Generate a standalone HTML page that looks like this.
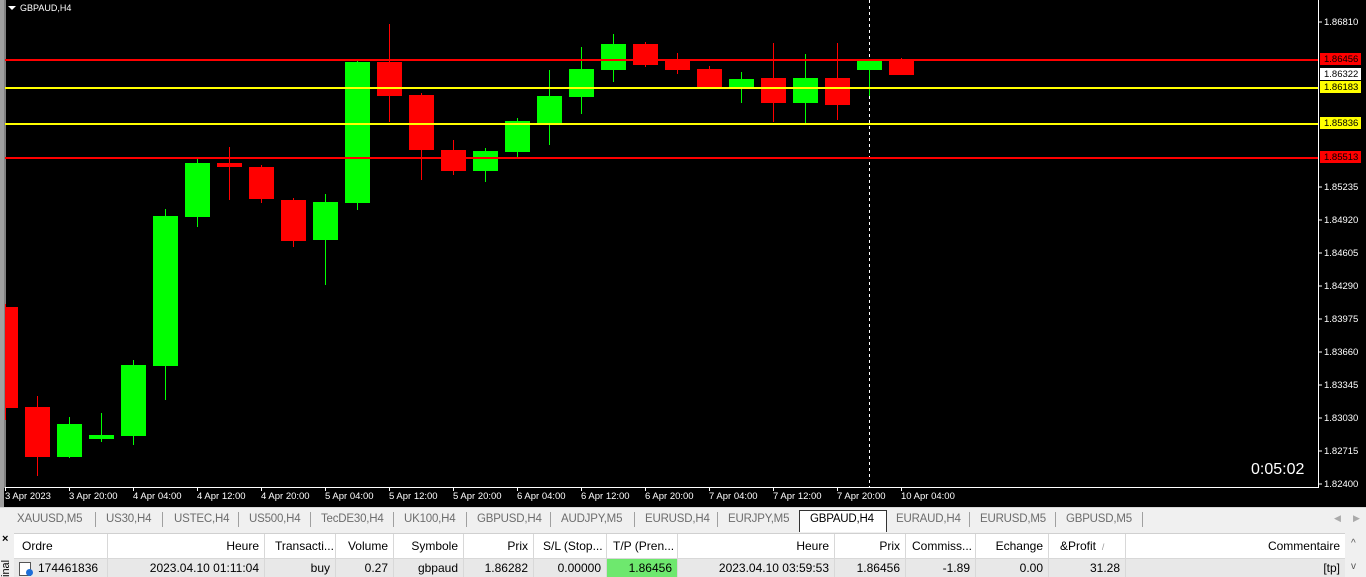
<!DOCTYPE html>
<html><head><meta charset="utf-8"><style>
*{margin:0;padding:0;box-sizing:border-box}
body{width:1366px;height:577px;overflow:hidden;background:#f0f0f0;font-family:"Liberation Sans",Tahoma,sans-serif;position:relative}
.abs{position:absolute}
.tabs{left:0;top:507px;width:1366px;height:24px;background:#f0f0f0;border-top:1px solid #d8d8d8}
.tab{position:absolute;top:5px;font-size:11.5px;color:#6d6d6d;letter-spacing:-0.2px}
.sep{position:absolute;top:4px;width:1px;height:15px;background:#a0a0a0}
.hdr{top:533px;height:26px;background:#fff;border-top:1px solid #d0d0d0}
.c{position:absolute;font-size:12px;color:#000;white-space:nowrap;overflow:hidden;padding:0 5px}
.h{top:539px}
.r{top:561px}
.vl{position:absolute;top:534px;width:1px;height:43px;background:#d8d8d8}
</style></head><body>
<div class="abs" style="left:0;top:0;width:4px;height:507px;background:#a0a0a0"></div>
<svg class="abs" style="left:4px;top:0" width="1362" height="507" viewBox="4 0 1362 507" font-family="Liberation Sans, sans-serif">
<rect x="4" y="0" width="1362" height="507" fill="#000"/>
<line x1="5" y1="0" x2="5" y2="488" stroke="#fff" stroke-width="1"/>
<line x1="1318.5" y1="0" x2="1318.5" y2="488" stroke="#fff"/>
<line x1="5" y1="487.5" x2="1319" y2="487.5" stroke="#fff"/>
<polygon points="8,6 16,6 12,10" fill="#fff"/>
<text x="20" y="11" font-size="9" fill="#fff">GBPAUD,H4</text>
<line x1="869.5" y1="0" x2="869.5" y2="487" stroke="#fff" stroke-dasharray="3,3"/>
<g id="cs"></g>
<rect x="5" y="59" width="1313" height="2" fill="#f00"/>
<rect x="5" y="87" width="1313" height="2" fill="#ff0"/>
<rect x="5" y="123" width="1313" height="2" fill="#ff0"/>
<rect x="5" y="157" width="1313" height="2" fill="#f00"/>
<g font-size="9.5" fill="#fff">
<g stroke="#fff"><line x1="1318" y1="22" x2="1322" y2="22"/><line x1="1318" y1="187" x2="1322" y2="187"/><line x1="1318" y1="220" x2="1322" y2="220"/><line x1="1318" y1="253" x2="1322" y2="253"/><line x1="1318" y1="286" x2="1322" y2="286"/><line x1="1318" y1="319" x2="1322" y2="319"/><line x1="1318" y1="352" x2="1322" y2="352"/><line x1="1318" y1="385" x2="1322" y2="385"/><line x1="1318" y1="418" x2="1322" y2="418"/><line x1="1318" y1="451" x2="1322" y2="451"/><line x1="1318" y1="484" x2="1322" y2="484"/></g>
<text x="1324" y="25">1.86810</text><text x="1324" y="190">1.85235</text><text x="1324" y="223">1.84920</text><text x="1324" y="256">1.84605</text><text x="1324" y="289">1.84290</text><text x="1324" y="322">1.83975</text><text x="1324" y="355">1.83660</text><text x="1324" y="388">1.83345</text><text x="1324" y="421">1.83030</text><text x="1324" y="454">1.82715</text><text x="1324" y="487">1.82400</text>
</g>
<rect x="1320" y="53" width="41" height="12" fill="#f00"/><text x="1324" y="62" font-size="9.5" fill="#000">1.86456</text>
<rect x="1320" y="68" width="41" height="12" fill="#fff"/><text x="1324" y="77" font-size="9.5" fill="#000">1.86322</text>
<rect x="1320" y="81" width="41" height="12" fill="#ff0"/><text x="1324" y="90" font-size="9.5" fill="#000">1.86183</text>
<rect x="1320" y="117" width="41" height="12" fill="#ff0"/><text x="1324" y="126" font-size="9.5" fill="#000">1.85836</text>
<rect x="1320" y="151" width="41" height="12" fill="#f00"/><text x="1324" y="160" font-size="9.5" fill="#000">1.85513</text>
<text x="1251" y="474" font-size="16" fill="#fff">0:05:02</text>
<g font-size="9.5" fill="#fff" id="tl"></g>
</svg>
<script>
var d=[[0,'r',307,408,304,420],[1,'r',407,457,396,476],[2,'g',424,457,417,458],[3,'g',435,439,413,442],[4,'g',365,436,360,445],[5,'g',216,366,209,400],[6,'g',163,217,157,227],[7,'r',163,167,147,200],[8,'r',167,199,165,203],[9,'r',200,241,198,247],[10,'g',202,240,194,285],[11,'g',62,203,60,210],[12,'r',62,96,24,122],[13,'r',95,150,93,180],[14,'r',150,171,140,175],[15,'g',151,171,148,182],[16,'g',121,152,118,157],[17,'g',96,123,70,145],[18,'g',69,97,47,114],[19,'g',44,70,34,82],[20,'r',44,65,42,67],[21,'r',59,70,53,74],[22,'r',69,87,66,88],[23,'g',79,87,72,103],[24,'r',78,103,43,122],[25,'g',78,103,54,125],[26,'r',78,105,43,120],[27,'g',59,70,59,96],[28,'r',59,75,58,75]];
var s='';d.forEach(function(a){var c=5+32*a[0],col=a[1]=='g'?'#00ff00':'#ff0000';var x=Math.max(5,c-12),w=c+13-x;
s+='<rect x="'+c+'" y="'+a[4]+'" width="1" height="'+(a[5]-a[4])+'" fill="'+col+'"/><rect x="'+x+'" y="'+a[2]+'" width="'+w+'" height="'+(a[3]-a[2])+'" fill="'+col+'"/>';});
document.getElementById('cs').innerHTML=s;
var L=['3 Apr 2023','3 Apr 20:00','4 Apr 04:00','4 Apr 12:00','4 Apr 20:00','5 Apr 04:00','5 Apr 12:00','5 Apr 20:00','6 Apr 04:00','6 Apr 12:00','6 Apr 20:00','7 Apr 04:00','7 Apr 12:00','7 Apr 20:00','10 Apr 04:00'];
var t='';L.forEach(function(l,i){var x=5+64*i;t+='<rect x="'+x+'" y="487" width="1" height="4" fill="#fff"/><text x="'+x+'" y="499">'+l+'</text>';});
document.getElementById('tl').innerHTML=t;
</script>
<div class="abs tabs">
<span class="tab" style="left:17px">XAUUSD,M5</span><div class="sep" style="left:95px"></div>
<span class="tab" style="left:106px">US30,H4</span><div class="sep" style="left:162px"></div>
<span class="tab" style="left:174px">USTEC,H4</span><div class="sep" style="left:238px"></div>
<span class="tab" style="left:249px">US500,H4</span><div class="sep" style="left:310px"></div>
<span class="tab" style="left:321px">TecDE30,H4</span><div class="sep" style="left:393px"></div>
<span class="tab" style="left:404px">UK100,H4</span><div class="sep" style="left:466px"></div>
<span class="tab" style="left:477px">GBPUSD,H4</span><div class="sep" style="left:550px"></div>
<span class="tab" style="left:561px">AUDJPY,M5</span><div class="sep" style="left:634px"></div>
<span class="tab" style="left:645px">EURUSD,H4</span><div class="sep" style="left:717px"></div>
<span class="tab" style="left:728px">EURJPY,M5</span>
<div class="abs" style="left:799px;top:2px;width:88px;height:22px;background:#fff;border:1px solid #333;border-bottom:none"></div>
<span class="tab" style="left:810px;color:#000">GBPAUD,H4</span>
<span class="tab" style="left:896px">EURAUD,H4</span><div class="sep" style="left:969px"></div>
<span class="tab" style="left:980px">EURUSD,M5</span><div class="sep" style="left:1055px"></div>
<span class="tab" style="left:1066px">GBPUSD,M5</span><div class="sep" style="left:1142px"></div>
<span class="tab" style="left:1334px;font-size:9px;color:#aaa">◀</span><span class="tab" style="left:1353px;font-size:9px;color:#aaa">▶</span>
</div>
<div class="abs hdr" style="left:14px;width:1352px"></div>
<div class="abs" style="left:14px;top:559px;width:1331px;height:18px;background:#e8e8e8"></div>
<div class="abs" style="left:606px;top:559px;width:71px;height:18px;background:#6ee86e"></div>
<div class="abs" style="left:0;top:531px;width:14px;height:46px;background:#f0f0f0"></div>
<div class="abs" style="left:2px;top:533px;font-size:11px;font-weight:bold">×</div>
<div class="abs" style="font-size:11px;transform:rotate(-90deg);transform-origin:left top;top:577px;left:0">inal</div>
<div class="abs" style="left:1345px;top:533px;width:21px;height:44px;background:#f0f0f0"></div>
<div class="abs" style="left:1351px;top:538px;font-size:10px;color:#555">^</div>
<div class="abs" style="left:1351px;top:561px;font-size:10px;color:#555">v</div>
<div class="vl" style="left:107px"></div><div class="vl" style="left:264px"></div><div class="vl" style="left:335px"></div><div class="vl" style="left:393px"></div><div class="vl" style="left:463px"></div><div class="vl" style="left:533px"></div><div class="vl" style="left:606px"></div><div class="vl" style="left:677px"></div><div class="vl" style="left:834px"></div><div class="vl" style="left:905px"></div><div class="vl" style="left:975px"></div><div class="vl" style="left:1048px"></div><div class="vl" style="left:1125px"></div>
<div class="abs" style="left:14px;top:558px;width:1331px;height:1px;background:#d8d8d8"></div>
<span class="c h" style="left:17px">Ordre</span>
<span class="c h" style="left:107px;width:157px;text-align:right">Heure</span>
<span class="c h" style="left:270px">Transacti...</span>
<span class="c h" style="left:335px;width:58px;text-align:right">Volume</span>
<span class="c h" style="left:393px;width:70px;text-align:right">Symbole</span>
<span class="c h" style="left:463px;width:70px;text-align:right">Prix</span>
<span class="c h" style="left:538px">S/L (Stop...</span>
<span class="c h" style="left:608px">T/P (Pren...</span>
<span class="c h" style="left:677px;width:157px;text-align:right">Heure</span>
<span class="c h" style="left:834px;width:71px;text-align:right">Prix</span>
<span class="c h" style="left:907px">Commiss...</span>
<span class="c h" style="left:975px;width:73px;text-align:right">Echange</span>
<span class="c h" style="left:1055px">&amp;Profit <span style="color:#999;font-size:9px">&nbsp;/</span></span>
<span class="c h" style="left:1125px;width:220px;text-align:right">Commentaire</span>
<div class="abs" style="left:19px;top:562px;width:12px;height:14px;border:1px solid #555;background:#fff"></div>
<div class="abs" style="left:26px;top:569px;width:7px;height:7px;border-radius:50%;background:#1c6ed8"></div>
<span class="c r" style="left:33px">174461836</span>
<span class="c r" style="left:107px;width:157px;text-align:right">2023.04.10 01:11:04</span>
<span class="c r" style="left:264px;width:71px;text-align:right">buy</span>
<span class="c r" style="left:335px;width:58px;text-align:right">0.27</span>
<span class="c r" style="left:393px;width:70px;text-align:right">gbpaud</span>
<span class="c r" style="left:463px;width:70px;text-align:right">1.86282</span>
<span class="c r" style="left:533px;width:73px;text-align:right">0.00000</span>
<span class="c r" style="left:606px;width:71px;text-align:right">1.86456</span>
<span class="c r" style="left:677px;width:157px;text-align:right">2023.04.10 03:59:53</span>
<span class="c r" style="left:834px;width:71px;text-align:right">1.86456</span>
<span class="c r" style="left:905px;width:70px;text-align:right">-1.89</span>
<span class="c r" style="left:975px;width:73px;text-align:right">0.00</span>
<span class="c r" style="left:1048px;width:77px;text-align:right">31.28</span>
<span class="c r" style="left:1125px;width:220px;text-align:right">[tp]</span>
</body></html>
